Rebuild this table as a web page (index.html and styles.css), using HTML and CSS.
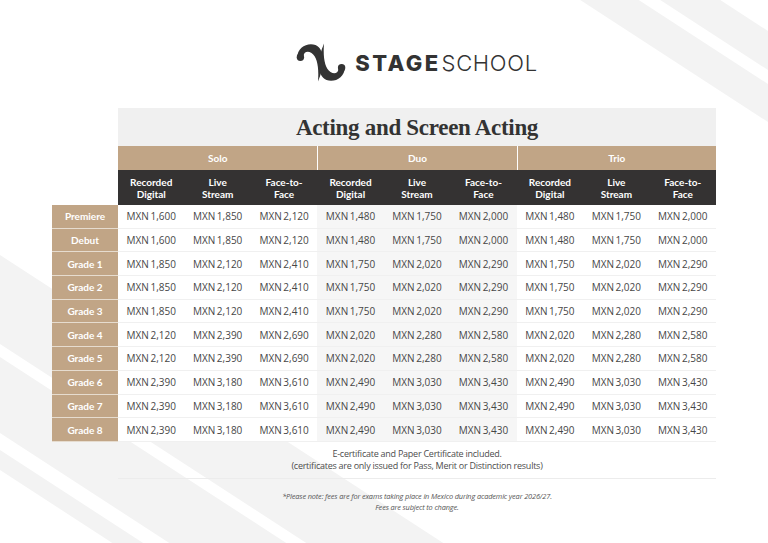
FILE: index.html
```html
<!DOCTYPE html>
<html lang="en">
<head>
<meta charset="utf-8">
<title>Stage School – Acting and Screen Acting fees</title>
<link rel="stylesheet" href="styles.css">
</head>
<body>
<div class="bg">
  <svg width="768" height="543" viewBox="0 0 768 543">
    <polygon points="0,255 768,754 768,843 0,344" fill="#f3f3f3"/>
    <polygon points="0,357 768,856 768,932 0,433" fill="#f3f3f3"/>
    <polygon points="0,450 768,949 768,969 0,470" fill="#f3f3f3"/>
    <polygon points="0,-415 768,84 768,122 0,-377" fill="#f3f3f3"/>
    <polygon points="0,-468 768,31 768,70 0,-429" fill="#f3f3f3"/>
  </svg>
</div>
<main class="page">
  <header class="logo">
    <svg class="mark" width="50" height="39" viewBox="0 0 50 39">
      <g fill="#333">
        <path id="cres" d="M1.2,14.5 C1.2,4.5 11.5,-1 19.5,2 C28.5,6 29.5,21 22,38.5 C23,25 21.5,14 15.5,10 C11.5,7.5 8,9 7.6,12.8 Z"/>
        <circle cx="4.4" cy="14.2" r="3.7"/>
        <path d="M1.2,14.5 C1.2,4.5 11.5,-1 19.5,2 C28.5,6 29.5,21 22,38.5 C23,25 21.5,14 15.5,10 C11.5,7.5 8,9 7.6,12.8 Z" transform="rotate(180 25 19.5)"/>
        <circle cx="45.6" cy="24.8" r="3.7"/>
      </g>
    </svg>
    <span class="brand"><span class="b1">STAGE</span><span class="b2">SCHOOL</span></span>
  </header>

  <section class="sheet">
    <div class="title">Acting and Screen Acting</div>

    <div class="grp first">Solo</div>
    <div class="grp sep">Duo</div>
    <div class="grp sep">Trio</div>

    <div class="sub first">Recorded<br>Digital</div>
    <div class="sub">Live<br>Stream</div>
    <div class="sub">Face-to-<br>Face</div>
    <div class="sub">Recorded<br>Digital</div>
    <div class="sub">Live<br>Stream</div>
    <div class="sub">Face-to-<br>Face</div>
    <div class="sub">Recorded<br>Digital</div>
    <div class="sub">Live<br>Stream</div>
    <div class="sub">Face-to-<br>Face</div>

    <div class="lab">Premiere</div>
    <div class="c">MXN 1,600</div><div class="c">MXN 1,850</div><div class="c">MXN 2,120</div>
    <div class="c d">MXN 1,480</div><div class="c d">MXN 1,750</div><div class="c d">MXN 2,000</div>
    <div class="c">MXN 1,480</div><div class="c">MXN 1,750</div><div class="c">MXN 2,000</div>

    <div class="lab">Debut</div>
    <div class="c">MXN 1,600</div><div class="c">MXN 1,850</div><div class="c">MXN 2,120</div>
    <div class="c d">MXN 1,480</div><div class="c d">MXN 1,750</div><div class="c d">MXN 2,000</div>
    <div class="c">MXN 1,480</div><div class="c">MXN 1,750</div><div class="c">MXN 2,000</div>

    <div class="lab">Grade 1</div>
    <div class="c">MXN 1,850</div><div class="c">MXN 2,120</div><div class="c">MXN 2,410</div>
    <div class="c d">MXN 1,750</div><div class="c d">MXN 2,020</div><div class="c d">MXN 2,290</div>
    <div class="c">MXN 1,750</div><div class="c">MXN 2,020</div><div class="c">MXN 2,290</div>

    <div class="lab">Grade 2</div>
    <div class="c">MXN 1,850</div><div class="c">MXN 2,120</div><div class="c">MXN 2,410</div>
    <div class="c d">MXN 1,750</div><div class="c d">MXN 2,020</div><div class="c d">MXN 2,290</div>
    <div class="c">MXN 1,750</div><div class="c">MXN 2,020</div><div class="c">MXN 2,290</div>

    <div class="lab">Grade 3</div>
    <div class="c">MXN 1,850</div><div class="c">MXN 2,120</div><div class="c">MXN 2,410</div>
    <div class="c d">MXN 1,750</div><div class="c d">MXN 2,020</div><div class="c d">MXN 2,290</div>
    <div class="c">MXN 1,750</div><div class="c">MXN 2,020</div><div class="c">MXN 2,290</div>

    <div class="lab">Grade 4</div>
    <div class="c">MXN 2,120</div><div class="c">MXN 2,390</div><div class="c">MXN 2,690</div>
    <div class="c d">MXN 2,020</div><div class="c d">MXN 2,280</div><div class="c d">MXN 2,580</div>
    <div class="c">MXN 2,020</div><div class="c">MXN 2,280</div><div class="c">MXN 2,580</div>

    <div class="lab">Grade 5</div>
    <div class="c">MXN 2,120</div><div class="c">MXN 2,390</div><div class="c">MXN 2,690</div>
    <div class="c d">MXN 2,020</div><div class="c d">MXN 2,280</div><div class="c d">MXN 2,580</div>
    <div class="c">MXN 2,020</div><div class="c">MXN 2,280</div><div class="c">MXN 2,580</div>

    <div class="lab">Grade 6</div>
    <div class="c">MXN 2,390</div><div class="c">MXN 3,180</div><div class="c">MXN 3,610</div>
    <div class="c d">MXN 2,490</div><div class="c d">MXN 3,030</div><div class="c d">MXN 3,430</div>
    <div class="c">MXN 2,490</div><div class="c">MXN 3,030</div><div class="c">MXN 3,430</div>

    <div class="lab">Grade 7</div>
    <div class="c">MXN 2,390</div><div class="c">MXN 3,180</div><div class="c">MXN 3,610</div>
    <div class="c d">MXN 2,490</div><div class="c d">MXN 3,030</div><div class="c d">MXN 3,430</div>
    <div class="c">MXN 2,490</div><div class="c">MXN 3,030</div><div class="c">MXN 3,430</div>

    <div class="lab">Grade 8</div>
    <div class="c">MXN 2,390</div><div class="c">MXN 3,180</div><div class="c">MXN 3,610</div>
    <div class="c d">MXN 2,490</div><div class="c d">MXN 3,030</div><div class="c d">MXN 3,430</div>
    <div class="c">MXN 2,490</div><div class="c">MXN 3,030</div><div class="c">MXN 3,430</div>
  </section>

  <div class="notes">
    <p>E-certificate and Paper Certificate included.</p>
    <p>(certificates are only issued for Pass, Merit or Distinction results)</p>
  </div>
  <div class="fine">
    <p>*Please note: fees are for exams taking place in Mexico during academic year 2026/27.</p>
    <p>Fees are subject to change.</p>
  </div>
</main>
</body>
</html>
```

FILE: styles.css
```css
* { box-sizing: border-box; }
html, body { margin: 0; padding: 0; }
body {
  width: 768px;
  height: 543px;
  position: relative;
  overflow: hidden;
  background: #ffffff;
  font-family: "Open Sans", "Noto Sans", sans-serif;
  color: #444;
}
.bg {
  position: absolute;
  left: 0;
  top: 0;
  width: 768px;
  height: 543px;
  z-index: 0;
}
.bg svg { display: block; }
.page {
  position: relative;
  z-index: 1;
  padding-top: 43px;
}
.logo {
  display: flex;
  align-items: center;
  justify-content: center;
  height: 39px;
  padding-left: 66px;
}
.mark { display: block; margin-right: 9px; }
.brand {
  display: flex;
  align-items: center;
  font-family: "Inter", "Lato", sans-serif;
  font-size: 22px;
  color: #333;
  line-height: 1;
}
.b1 { font-weight: 800; letter-spacing: 2.4px; margin-right: 1px; }
.b2 { font-weight: 300; letter-spacing: 0.7px; }

.sheet {
  display: grid;
  grid-template-columns: 66px repeat(9, 1fr);
  width: 664px;
  margin: 26px 0 0 52px;
}
.title {
  grid-column: 2 / -1;
  height: 38px;
  background: #f0f0f0;
  display: flex;
  align-items: center;
  justify-content: center;
  font-family: "Liberation Serif", "DejaVu Serif", serif;
  font-weight: 700;
  font-size: 23px;
  letter-spacing: -0.3px;
  color: #333;
  padding-top: 2px;
}
.grp {
  grid-column: span 3;
  height: 24px;
  background: #c1a586;
  color: #fff;
  font-family: "Lato", "Open Sans", sans-serif;
  font-weight: 700;
  font-size: 10px;
  display: flex;
  align-items: center;
  justify-content: center;
}
.grp.first { grid-column: 2 / span 3; }
.grp.sep { border-left: 1px solid #ffffff; }
.sub {
  height: 35px;
  background: #343232;
  color: #fff;
  font-family: "Lato", "Open Sans", sans-serif;
  font-weight: 700;
  font-size: 10px;
  line-height: 12px;
  display: flex;
  align-items: center;
  justify-content: center;
  text-align: center;
}
.sub.first { grid-column-start: 2; }
.lab {
  height: 23.7px;
  background: #c1a586;
  color: #fff;
  font-family: "Lato", "Open Sans", sans-serif;
  font-weight: 700;
  font-size: 10px;
  display: flex;
  align-items: center;
  justify-content: center;
  border-bottom: 1px solid #e6dccf;
}
.c {
  height: 23.7px;
  background: #fff;
  font-size: 10px;
  word-spacing: -1px;
  color: #474747;
  display: flex;
  align-items: center;
  justify-content: center;
  border-bottom: 1.5px solid #f0f0f0;
}
.c.d { background: #f6f6f6; }

.notes {
  margin: 0 0 0 118px;
  width: 598px;
  padding: 6px 0 6px;
  border-bottom: 1px solid #ececec;
  text-align: center;
  font-size: 9px;
  line-height: 12px;
  letter-spacing: -0.25px;
  color: #4d4d4d;
}
.notes p, .fine p { margin: 0; }
.fine {
  margin: 12px 0 0 118px;
  width: 598px;
  text-align: center;
  font-size: 7.4px;
  line-height: 11px;
  font-style: italic;
  letter-spacing: -0.15px;
  color: #555;
}
```
